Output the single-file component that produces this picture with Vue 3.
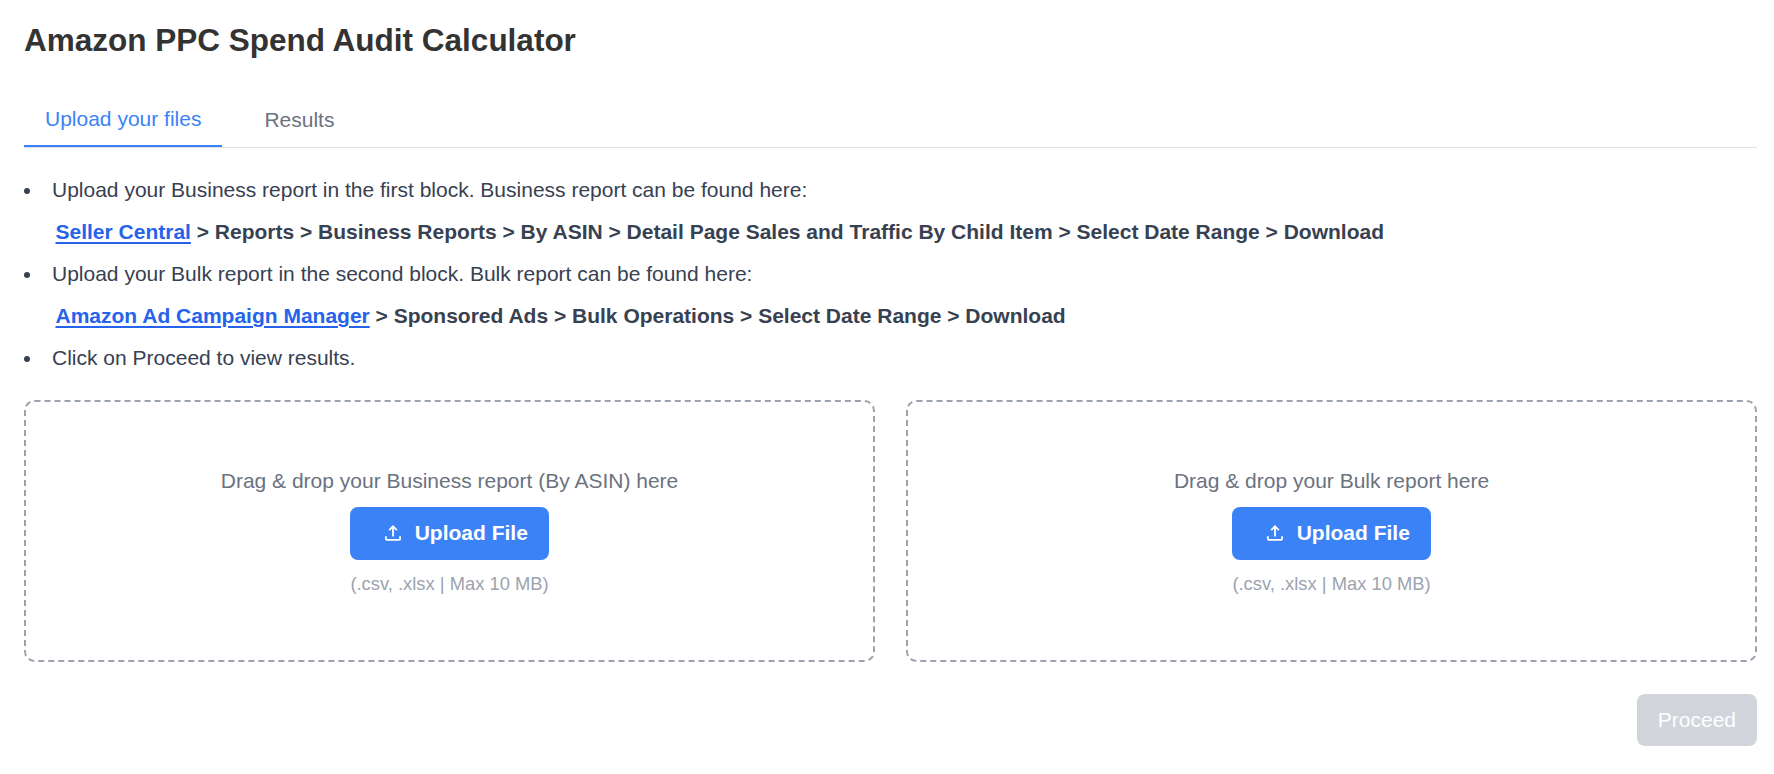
<script setup>
import { ref } from 'vue'

const tabs = ['Upload your files', 'Results']
const activeTab = ref(tabs[0])

const uploads = [
  { id: 'business', label: 'Drag & drop your Business report (By ASIN) here' },
  { id: 'bulk', label: 'Drag & drop your Bulk report here' }
]
</script>

<template>
  <main class="calculator">
    <h1>Amazon PPC Spend Audit Calculator</h1>

    <nav class="tabs">
      <button
        v-for="tab in tabs"
        :key="tab"
        class="tab"
        :class="{ active: tab === activeTab }"
        @click="activeTab = tab"
      >
        {{ tab }}
      </button>
    </nav>

    <ul class="steps">
      <li>
        <span>Upload your Business report in the first block. Business report can be found here:</span>
        <p class="path">
          <a href="#">Seller Central</a> &gt; Reports &gt; Business Reports &gt; By ASIN &gt;
          Detail Page Sales and Traffic By Child Item &gt; Select Date Range &gt; Download
        </p>
      </li>
      <li>
        <span>Upload your Bulk report in the second block. Bulk report can be found here:</span>
        <p class="path">
          <a href="#">Amazon Ad Campaign Manager</a> &gt; Sponsored Ads &gt; Bulk Operations &gt;
          Select Date Range &gt; Download
        </p>
      </li>
      <li><span>Click on Proceed to view results.</span></li>
    </ul>

    <div class="uploads">
      <section v-for="item in uploads" :key="item.id" class="dropzone">
        <p class="label">{{ item.label }}</p>
        <button class="upload">
          <svg class="icon" viewBox="0 0 16 16" fill="none" stroke="currentColor">
            <path d="M8 11.5V1.6M4.2 5.1L8 1.3l3.8 3.8M.9 11.3v2.6a.9.9 0 0 0 .9.9h12.4a.9.9 0 0 0 .9-.9v-2.6" />
          </svg>
          Upload File
        </button>
        <p class="hint">(.csv, .xlsx | Max 10 MB)</p>
      </section>
    </div>

    <footer class="actions">
      <button class="proceed" disabled>Proceed</button>
    </footer>
  </main>
</template>

<style>
body {
  background: #fff;
}
</style>

<style scoped>
.calculator {
  padding: 19px 17px 0 24px;
  font-family: 'Liberation Sans', Arial, sans-serif;
  font-size: 21px;
  color: #374151;
}
h1 {
  margin: 0;
  font-size: 31.5px;
  line-height: 42px;
  color: #333;
}
button {
  font: inherit;
  border: 0;
  cursor: pointer;
}
.tabs {
  display: flex;
  gap: 21px;
  height: 55px;
  margin-top: 31px;
  border-bottom: 1px solid #e0e0e0;
}
.tab {
  padding: 0 21px;
  background: none;
  color: #6b7280;
}
.tab.active {
  color: #3b82f6;
  border-bottom: 2px solid #3b82f6;
}
.steps {
  margin: 21px 0;
  padding-left: 28px;
  line-height: 42px;
  list-style: none;
}
.steps li::before {
  content: '';
  display: inline-block;
  width: 6px;
  height: 6px;
  margin: 0 22px 0 -28px;
  border-radius: 50%;
  background: #374151;
  vertical-align: middle;
}
.path {
  margin: 0 0 0 3.5px;
  font-weight: bold;
}
.path a {
  color: #2563eb;
  text-decoration-thickness: 2px;
  text-underline-offset: 3px;
}
.uploads {
  display: grid;
  grid-template-columns: 1fr 1fr;
  gap: 31px;
}
.dropzone {
  display: flex;
  flex-direction: column;
  align-items: center;
  box-sizing: border-box;
  height: 262px;
  padding-top: 63px;
  border: 2px dashed #9ca3af;
  border-radius: 10.5px;
}
.label {
  margin: 0 0 10px;
  line-height: 32px;
  color: #6b7280;
}
.upload {
  display: flex;
  align-items: center;
  height: 53px;
  padding: 0 21px 2px 35px;
  border-radius: 8px;
  background: #3b82f6;
  color: #fff;
  font-weight: bold;
}
.icon {
  width: 16px;
  height: 16px;
  margin-right: 13.5px;
  stroke-width: 1.8;
}
.hint {
  margin: 10px 0 0;
  font-size: 18.375px;
  line-height: 28px;
  color: #9ca3af;
}
.actions {
  display: flex;
  justify-content: flex-end;
  margin-top: 32px;
}
.proceed {
  height: 52px;
  padding: 0 21px;
  border-radius: 8px;
  background: #d1d5db;
  color: #fff;
  cursor: not-allowed;
}
</style>
